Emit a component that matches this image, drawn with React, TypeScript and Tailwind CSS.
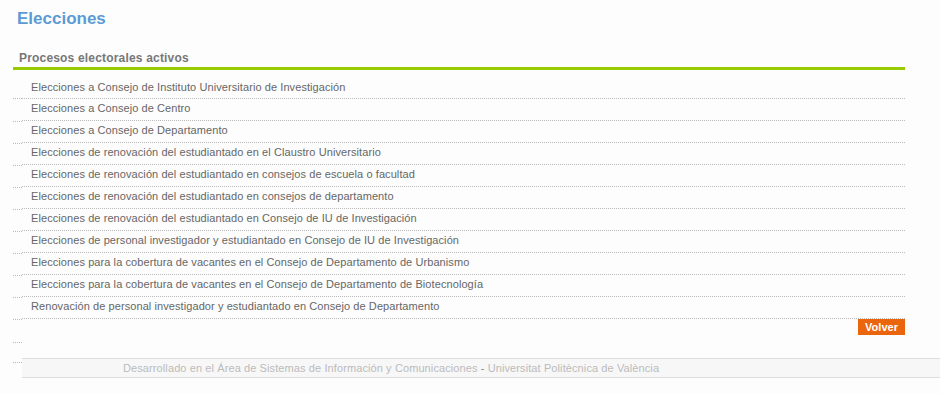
const procesos = [
  "Elecciones a Consejo de Instituto Universitario de Investigación",
  "Elecciones a Consejo de Centro",
  "Elecciones a Consejo de Departamento",
  "Elecciones de renovación del estudiantado en el Claustro Universitario",
  "Elecciones de renovación del estudiantado en consejos de escuela o facultad",
  "Elecciones de renovación del estudiantado en consejos de departamento",
  "Elecciones de renovación del estudiantado en Consejo de IU de Investigación",
  "Elecciones de personal investigador y estudiantado en Consejo de IU de Investigación",
  "Elecciones para la cobertura de vacantes en el Consejo de Departamento de Urbanismo",
  "Elecciones para la cobertura de vacantes en el Consejo de Departamento de Biotecnología",
  "Renovación de personal investigador y estudiantado en Consejo de Departamento",
];

export default function App() {
  return (
    <div
      className="w-[940px] h-[394px] bg-[#fdfdfd] text-[11px] text-[#666]"
      style={{ fontFamily: '"Liberation Sans", Arial, sans-serif' }}
    >
      <h1 className="pt-[8px] pl-[17px] h-[47px] text-[17px] font-bold text-[#5b9bd5] leading-[22px]">
        Elecciones
      </h1>

      <div className="ml-[13px] w-[892px]">
        <h2 className="pl-[6px] h-[23px] text-[12px] font-bold text-[#777] tracking-[0.18px] leading-[22px] border-b-[3px] border-[#99cc00]">
          Procesos electorales activos
        </h2>

        <ul className="pt-[8px] tracking-[0.08px]">
          {procesos.map((p, i) => (
            <li key={p} className="flex items-start">
              <div
                className={
                  i === 0
                    ? "w-[9px] h-[21px] border-b border-dotted border-[#bbb]"
                    : "w-[9px] h-[23px] mb-[-2px] border-b border-dotted border-[#bbb]"
                }
              />
              <a
                href="#"
                className={
                  (i === 0 ? "h-[21px] leading-[19px] " : "h-[22px] leading-[18px] ") +
                  "flex-1 pl-[9px] border-b border-dotted border-[#bbb] text-[#666]"
                }
              >
                {p}
              </a>
            </li>
          ))}
        </ul>

        <div className="flex items-start">
          <div className="w-[9px] h-[24px] border-b border-dotted border-[#bbb]" />
          <div className="flex-1 flex justify-end">
            <button className="w-[47px] h-[16px] bg-[#ea650d] text-white font-bold text-[11px] leading-[16px]">
              Volver
            </button>
          </div>
        </div>
      </div>

      <div className="flex items-start mt-[15px]">
        <div className="ml-[13px] w-[9px] mt-[3px] h-[2px] border-b border-dotted border-[#bbb]" />
        <div className="flex-1 h-[20px] bg-[#f7f7f7] border-y border-[#ddd] pl-[101px] leading-[18px] text-[#bbb] tracking-[0.1px]">
          Desarrollado en el Área de Sistemas de Información y Comunicaciones{" "}
          <span className="text-[#888]">-</span> Universitat Politècnica de València
        </div>
      </div>
    </div>
  );
}
